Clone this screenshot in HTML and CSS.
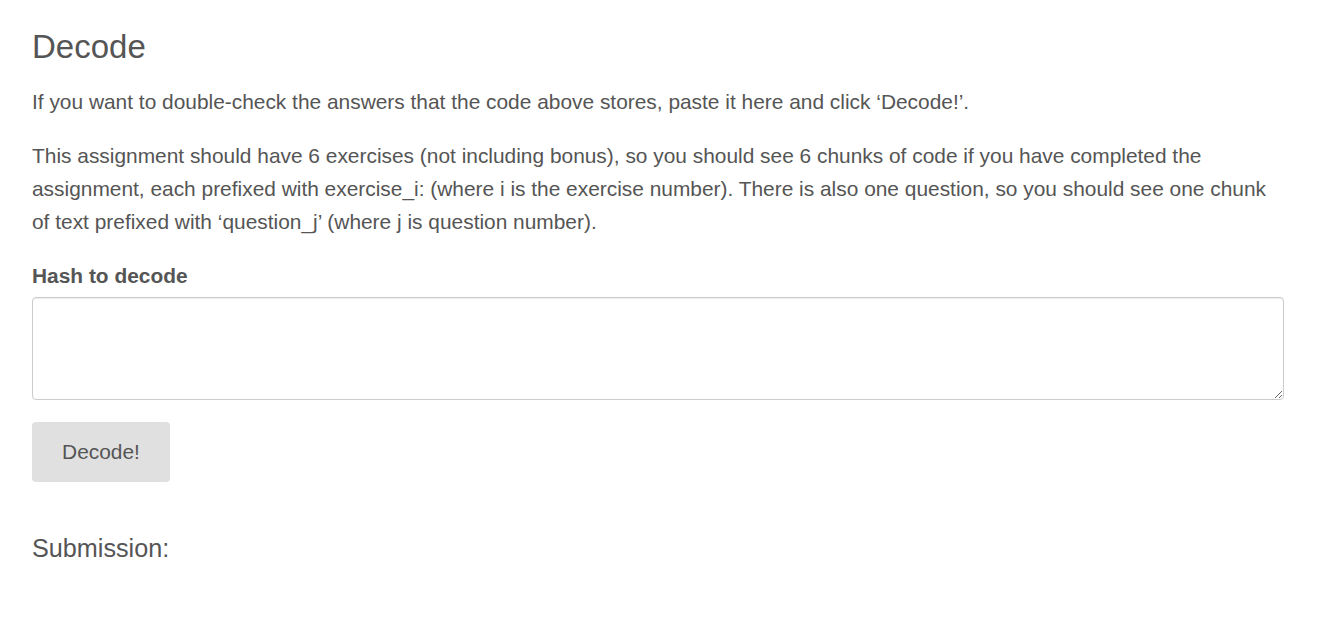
FILE: index.html
```html
<!DOCTYPE html>
<html>
<head>
<meta charset="utf-8">
<link rel="stylesheet" href="styles.css">
</head>
<body>
<main class="page">
  <h2 class="title">Decode</h2>
  <p class="text">If you want to double-check the answers that the code above stores, paste it here and click ‘Decode!’.</p>
  <p class="text">This assignment should have 6 exercises (not including bonus), so you should see 6 chunks of code if you have completed the assignment, each prefixed with exercise_i: (where i is the exercise number). There is also one question, so you should see one chunk of text prefixed with ‘question_j’ (where j is question number).</p>
  <label class="label">Hash to decode</label>
  <textarea class="hash"></textarea>
  <button class="btn">Decode!</button>
  <h3 class="sub">Submission:</h3>
</main>
</body>
</html>
```
FILE: styles.css
```css
html, body {
  margin: 0;
  padding: 0;
  background: #fff;
}
body {
  font-family: "Liberation Sans", Arial, sans-serif;
  color: #555;
}
.page {
  padding: 0 48px 0 32px;
  display: flex;
  flex-direction: column;
  align-items: flex-start;
}
.title {
  font-size: 33px;
  font-weight: normal;
  margin: 28px 0 0;
  line-height: 38px;
}
.text {
  font-size: 20.9px;
  line-height: 33px;
  margin: 19px 0 0;
}
.text + .text {
  margin-top: 21px;
}
.label {
  font-size: 20.9px;
  font-weight: bold;
  margin-top: 25px;
  line-height: 26px;
}
.hash {
  box-sizing: border-box;
  width: 100%;
  height: 103px;
  margin-top: 8px;
  border: 1px solid #ccc;
  border-radius: 4px;
  box-shadow: inset 0 1px 1px rgba(0,0,0,0.075);
  font-family: inherit;
  font-size: 18px;
  padding: 6px 12px;
  resize: vertical;
}
.btn {
  margin-top: 22px;
  width: 138px;
  height: 60px;
  border: none;
  border-radius: 4px;
  background: #e0e0e0;
  color: #555;
  font-family: inherit;
  font-size: 20.9px;
}
.sub {
  font-size: 25.2px;
  font-weight: normal;
  margin: 51px 0 0;
  line-height: 30px;
}
```
